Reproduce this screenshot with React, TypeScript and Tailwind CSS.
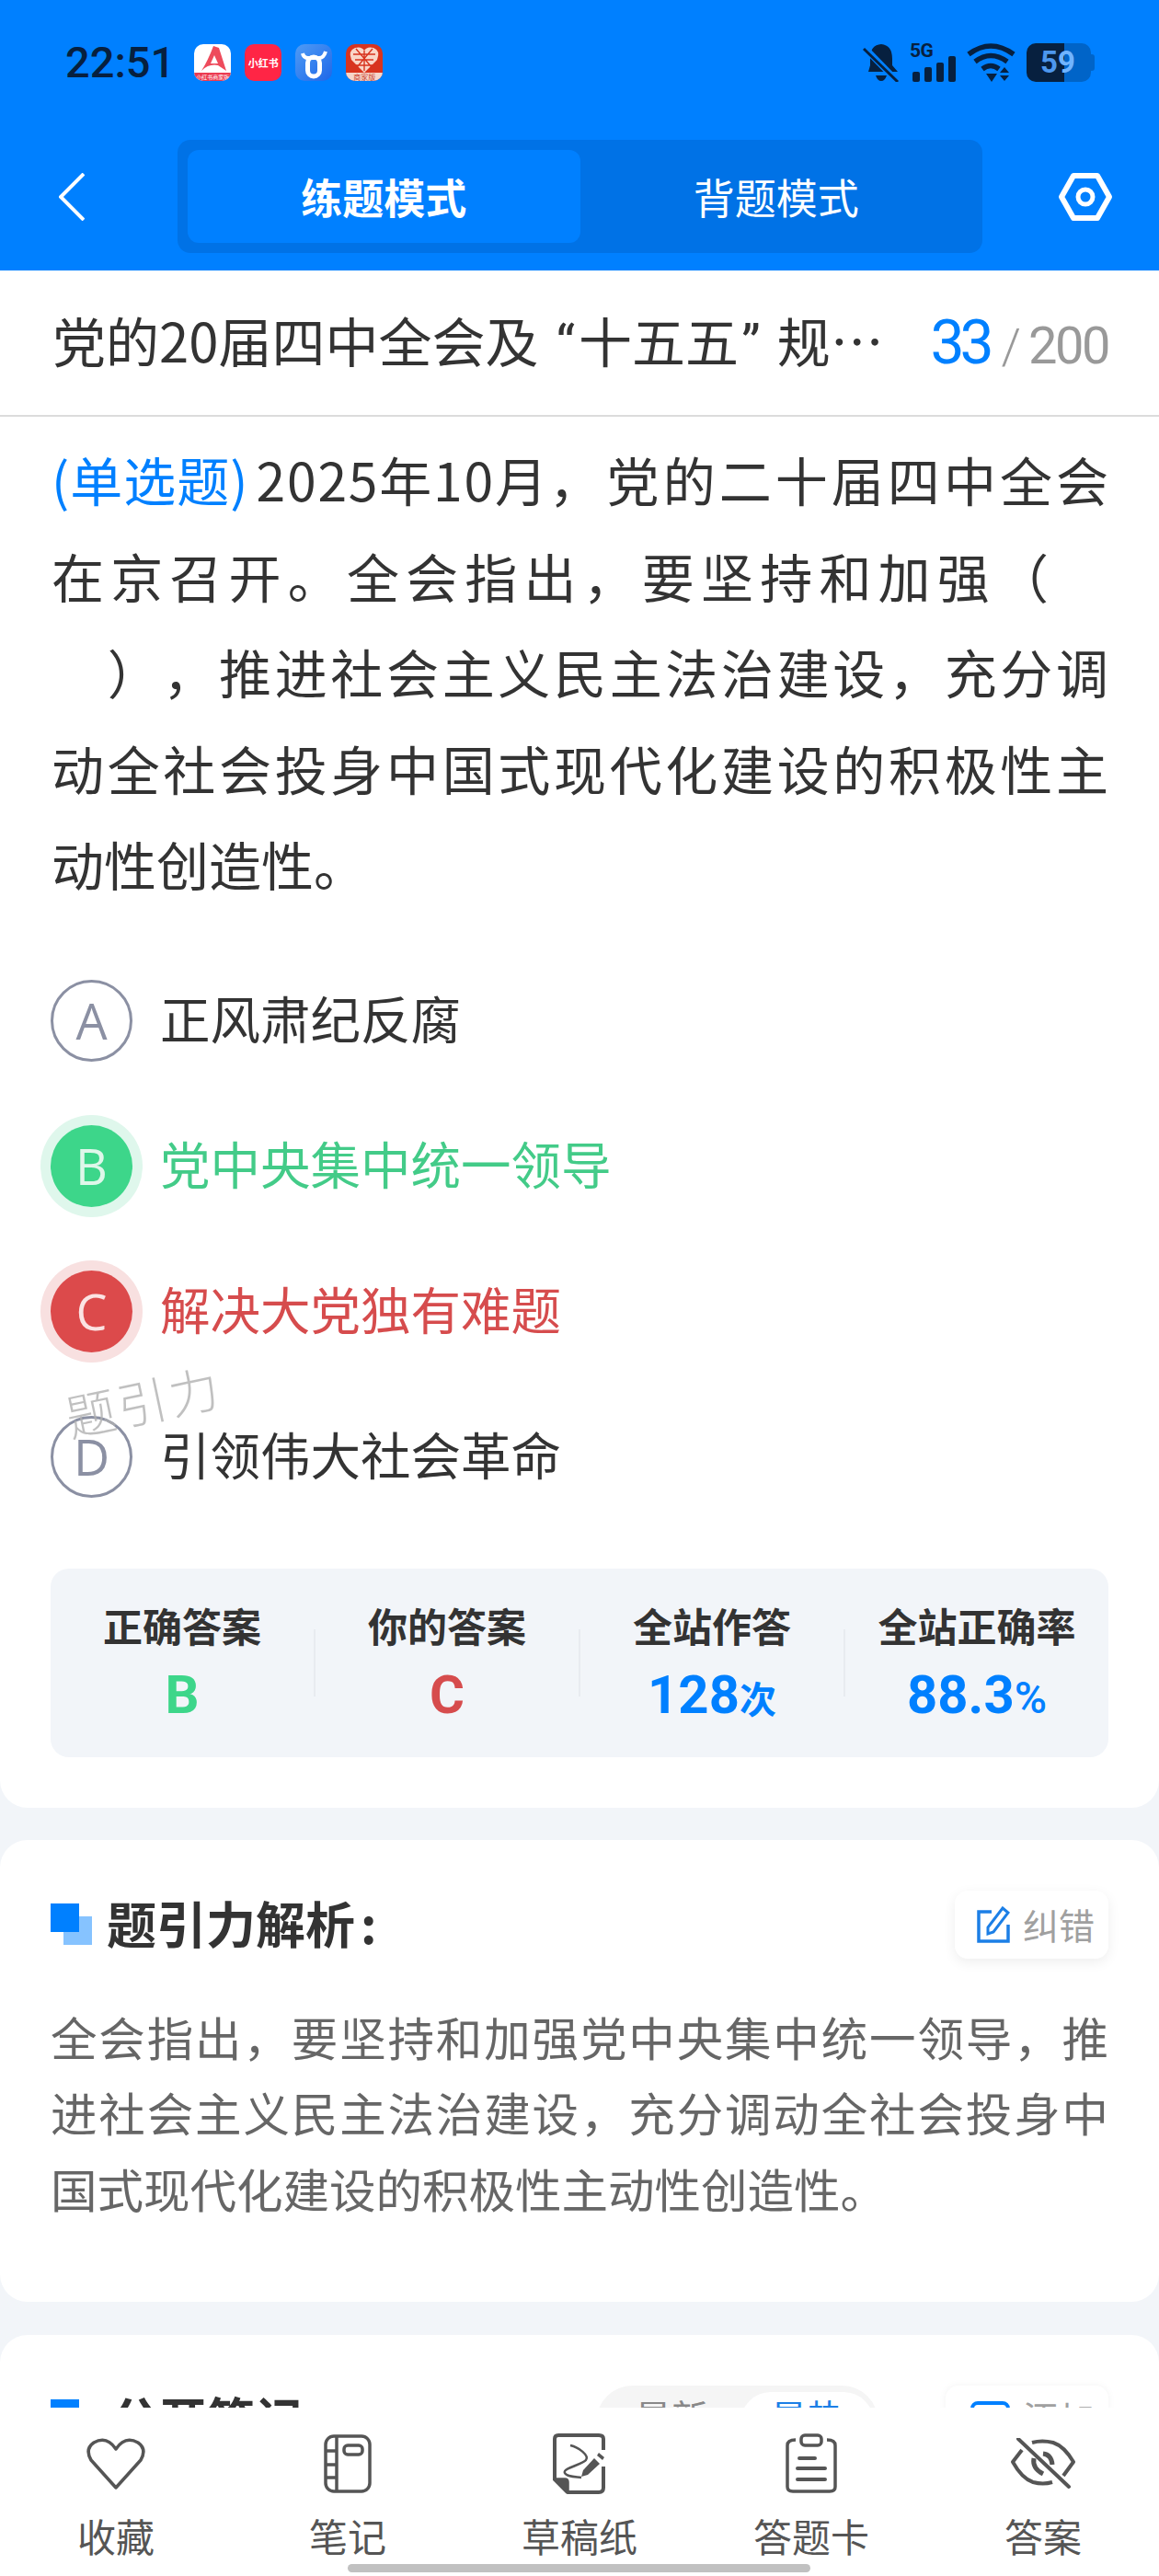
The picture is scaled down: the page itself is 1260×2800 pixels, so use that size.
const cjk = "font-['Noto_Sans_CJK_SC','Noto_Sans',sans-serif]"

const AppIcons = () => {
    return (
        <div className="flex gap-[15px] ml-[21px]">
            <div className="w-[40px] h-[40px] rounded-[10px] bg-white overflow-hidden flex flex-col items-center">
                <svg width="40" height="31" viewBox="0 0 40 31" className="shrink-0">
                    <path d="M21 2 L27 4 L35 29 L26 23 Q16 21 8 29 Q15 18 21 2 Z" fill="#ee4b5c" />
                    <path d="M22 12 L26 21 L18 21 Z" fill="#fff" />
                </svg>
                <div className="w-full flex-1 bg-[#ec3a50] text-white text-[6px] leading-[9px] text-center whitespace-nowrap">小红书商家版</div>
            </div>
            <div className="w-[40px] h-[40px] rounded-[10px] bg-[#ff2545] flex items-center justify-center text-white text-[11px] font-bold leading-none whitespace-nowrap">小红书</div>
            <div className="w-[40px] h-[40px] rounded-[10px] bg-gradient-to-br from-[#4f9bf5] to-[#1f66e8] flex items-center justify-center">
                <svg width="40" height="40" viewBox="0 0 40 40" fill="none" stroke="#fff">
                    <rect x="13.5" y="14" width="13" height="21" rx="6.5" strokeWidth="5" />
                    <path d="M8 10 Q9 15 14 15 H26 Q31 15 33 8" strokeWidth="4" />
                </svg>
            </div>
            <div className="w-[40px] h-[40px] rounded-[10px] bg-[#d8341f] overflow-hidden flex flex-col items-center">
                <svg width="36" height="30" viewBox="0 0 36 30" className="shrink-0 mt-[1px]">
                    <path d="M18 30 L4 16 Q0 6 8 3 Q15 1 18 6 Q21 1 28 3 Q36 6 32 16 Z" fill="#f9d6c8" />
                    <path d="M18 6 V28 M6 10 H30 M8 16 H28 M8 22 H28 M9 4 L26 24 M27 4 L10 24" stroke="#d8341f" strokeWidth="1.4" />
                </svg>
                <div className="w-full flex-1 bg-[#f6d6cb] text-[#c8402a] text-[8px] leading-[9px] text-center whitespace-nowrap">商家版</div>
            </div>
        </div>
    )
}

const StatusRight = () => {
    return (
        <div className="flex items-center h-[42px]">
            <svg width="40" height="42" viewBox="0 0 40 42" fill="#07203f">
                <path d="M20 1 Q32 2 32 17 V24 L38 31 H6 L8 24 V16 Q8 2 20 1 Z" />
                <path d="M14 35 H26 Q24 41 20 41 Q16 41 14 35 Z" />
                <path d="M2 5 L37 41" stroke="#0080ff" strokeWidth="7" />
                <path d="M1 6 L38 42" stroke="#07203f" strokeWidth="3" />
            </svg>
            <div className="relative w-[50px] h-[42px] ml-[11px]">
                <span className="absolute left-0 top-[-1px] font-['Roboto',sans-serif] font-bold text-[21px] leading-[18px] text-[#07203f] tracking-[-0.5px]">5G</span>
                <div className="absolute bottom-0 left-[3px] flex items-end gap-[5px]">
                    <div className="w-[8px] h-[11px] rounded-[2px] bg-[#07203f]" />
                    <div className="w-[8px] h-[16px] rounded-[2px] bg-[#07203f]" />
                    <div className="w-[8px] h-[21px] rounded-[2px] bg-[#07203f]" />
                    <div className="w-[8px] h-[28px] rounded-[2px] bg-[#07203f]" />
                </div>
            </div>
            <svg width="54" height="42" viewBox="0 0 54 42" className="ml-[12px]" fill="none" stroke="#07203f" strokeWidth="5.5">
                <path d="M2 12 Q26 -6 51 12" />
                <path d="M9 20 Q26 7 44 20" />
                <path d="M17 28 Q26 21 35 28" />
                <path d="M21 33 H33 L27 42 Z" fill="#07203f" stroke="none" />
                <path d="M41 26 L46 32 H36 Z M36 35 H46 L41 41 Z" fill="#07203f" stroke="none" />
            </svg>
            <div className="relative flex w-[74px] h-[42px] ml-[11px] items-center">
                <div className="w-[41px] h-full bg-[#07203f] rounded-l-[10px]" />
                <div className="w-[29px] h-full bg-[#0064c8] rounded-r-[10px]" />
                <div className="w-[4px] h-[18px] bg-[#0064c8] rounded-r-[3px]" />
                <span className="absolute left-[15px] top-0 font-['Roboto',sans-serif] font-bold text-[33px] leading-[42px] text-[#4d97ee]">5<span className="text-[#70b4ff]">9</span></span>
            </div>
        </div>
    )
}

const Header = () => {
    return (
        <header className="h-[294px] bg-[#0080ff] pt-[47px]">
            <div className="flex items-center justify-between h-[42px] pl-[71px] pr-[70px]">
                <div className="flex items-center">
                    <span className="font-['Roboto',sans-serif] font-medium text-[47px] leading-[42px] text-[#07203f]">22:51</span>
                    <AppIcons />
                </div>
                <StatusRight />
            </div>
            <div className="flex items-center mt-[63px] pl-[64px]">
                <svg width="28" height="52" viewBox="0 0 28 52" fill="none" stroke="#fff" strokeWidth="4">
                    <path d="M27 1 L2 26 L27 51" />
                </svg>
                <div className="grid grid-cols-2 w-[875px] h-[123px] ml-[101px] p-[11px] rounded-[14px] bg-[#0072e6]">
                    <div className="flex items-center justify-center rounded-[12px] bg-[#0080ff] text-white text-[45px] font-bold">练题模式</div>
                    <div className="flex items-center justify-center text-white text-[45px]">背题模式</div>
                </div>
                <svg width="60" height="54" viewBox="0 0 60 54" fill="none" stroke="#fff" strokeWidth="6" className="ml-[82px]">
                    <path d="M17 4 H43 L56 27 L43 50 H17 L4 27 Z" strokeLinejoin="round" />
                    <circle cx="30" cy="27" r="8" strokeWidth="5" />
                </svg>
            </div>
        </header>
    )
}

const Option = ({letter, text, state}:{letter:string, text:string, state?:'right'|'wrong'}) => {
    const circle = state === 'right'
        ? "bg-[#3dd68a] text-[#dff7ea] shadow-[0_0_0_11px_#dff7ec]"
        : state === 'wrong'
        ? "bg-[#dc4a4b] text-[#fbe3e3] shadow-[0_0_0_11px_#f8e0e0]"
        : "border-[3px] border-[#8b90a3] text-[#8b90a3]"
    const color = state === 'right' ? "text-[#43cb88]" : state === 'wrong' ? "text-[#d64c4d]" : "text-[#333333]"
    return (
        <div className="flex items-center h-[90px]">
            <div className={`flex items-center justify-center w-[89px] h-[89px] rounded-full font-['Open_Sans',sans-serif] font-normal text-[54px] ${circle}`}>{letter}</div>
            <span className={`ml-[30px] mb-[6px] text-[54.5px] leading-none ${color}`}>{text}</span>
        </div>
    )
}

const Stat = ({label, children}:{label:string, children:React.ReactNode}) => {
    return (
        <div className="flex-1 flex flex-col items-center">
            <div className="text-[43px] leading-[50px] font-bold text-[#333333]">{label}</div>
            <div className="mt-[20px] h-[62px] flex items-baseline font-['Roboto',sans-serif] font-bold text-[58px] leading-[62px]">{children}</div>
        </div>
    )
}

const Question = () => {
    const justified = "[text-align-last:justify]"
    return (
        <section className="bg-white rounded-b-[30px] px-[55px] pt-[15px] pb-[55px]">
            <div className="pl-[1px] text-[57px] leading-[104.5px] text-[#333333] [text-spacing-trim:space-all]">
                <div className={justified}><span className="inline-block mr-[8px] tracking-[1px] text-[#0080ff]">(单选题)</span><span className="inline-block tracking-[1.8px]">2025年10月，</span>党的二十届四中全会</div>
                <div className={`${justified} pr-[65px]`}>在京召开。全会指出，要坚持和加强（</div>
                <div className={justified}>　），推进社会主义民主法治建设，充分调</div>
                <div className={justified}>动全社会投身中国式现代化建设的积极性主</div>
                <div>动性创造性。</div>
            </div>
            <div className="relative flex flex-col gap-[68px] mt-[74px]">
                <Option letter="A" text="正风肃纪反腐" />
                <Option letter="B" text="党中央集中统一领导" state="right" />
                <Option letter="C" text="解决大党独有难题" state="wrong" />
                <Option letter="D" text="引领伟大社会革命" />
                <div className="absolute left-[15px] top-[430px] -rotate-[12deg] text-[54px] leading-none tracking-[3px] text-[#b0b0b0]/80 font-light">题引力</div>
            </div>
            <div className="flex items-center h-[205px] mt-[76px] rounded-[20px] bg-[#f2f5f9]">
                <Stat label="正确答案"><span className="text-[#3dd68a]">B</span></Stat>
                <div className="w-[2px] h-[73px] bg-[#e8ebf0]" />
                <Stat label="你的答案"><span className="text-[#d64c4d]">C</span></Stat>
                <div className="w-[2px] h-[73px] bg-[#e8ebf0]" />
                <Stat label="全站作答"><span className="text-[#0080ff]">128<span className={`${cjk} text-[40px]`}>次</span></span></Stat>
                <div className="w-[2px] h-[73px] bg-[#e8ebf0]" />
                <Stat label="全站正确率"><span className="text-[#0080ff]">88.3<span className="text-[48px] font-medium">%</span></span></Stat>
            </div>
        </section>
    )
}

const Analysis = () => {
    return (
        <section className="mt-[35px] h-[502px] bg-white rounded-[30px] px-[55px] pt-[55px]">
            <div className="flex items-center justify-between h-[74px]">
                <div className="flex items-center">
                    <div className="relative w-[45px] h-[45px]">
                        <div className="absolute left-[14px] top-[14px] w-[31px] h-[31px] bg-[#86c3ff]" />
                        <div className="absolute left-0 top-0 w-[31px] h-[31px] bg-[#0080ff]" />
                    </div>
                    <span className="ml-[16px] mb-[4px] text-[54px] leading-none font-bold text-[#333333]">题引力解析<span className="ml-[6px]">:</span></span>
                </div>
                <div className="flex items-center w-[167px] h-[74px] pl-[24px] rounded-[14px] bg-white shadow-[0_4px_14px_rgba(0,0,0,0.07)]">
                    <svg width="36" height="40" viewBox="0 0 36 40" fill="none" stroke="#1c7fe6" strokeWidth="3.5">
                        <path d="M16 6 H2 V38 H34 V20" />
                        <path d="M28 2 L34 7 L18 28 L12 30 L12 23 Z" strokeWidth="3" />
                    </svg>
                    <span className="ml-[14px] text-[39px] leading-none text-[#a0a0a0]">纠错</span>
                </div>
            </div>
            <div className="mt-[43px] text-[50.5px] leading-[82.5px] text-[#666666]">
                <div className="[text-align-last:justify]">全会指出，要坚持和加强党中央集中统一领导，推</div>
                <div className="[text-align-last:justify]">进社会主义民主法治建设，充分调动全社会投身中</div>
                <div>国式现代化建设的积极性主动性创造性。</div>
            </div>
        </section>
    )
}

const Notes = () => {
    return (
        <section className="mt-[36px] h-[300px] bg-white rounded-t-[30px] px-[55px] pt-[55px]">
            <div className="flex items-start justify-between">
                <div className="flex items-start">
                    <div className="w-[31px] h-[31px] mt-[15px] bg-[#0080ff]" />
                    <span className="ml-[35px] mt-[9px] text-[52px] leading-none font-bold text-[#333333]">公开笔记</span>
                </div>
                <div className="flex items-start">
                    <div className="flex w-[307px] h-[80px] rounded-[40px] bg-[#f5f5f5] p-[7px] pr-[5px] text-[40px] leading-[40px]">
                        <div className="flex-1 flex justify-center pt-[6px] text-[#888888]">最新</div>
                        <div className="w-[145px] flex justify-center pt-[6px] rounded-[34px] bg-white text-[#1c7fe6]">最热</div>
                    </div>
                    <div className="flex items-start w-[177px] h-[80px] ml-[73px] pl-[27px] pt-[17px] rounded-[14px] bg-white shadow-[0_0_8px_rgba(0,0,0,0.05)]">
                        <div className="w-[43px] h-[43px] rounded-[8px] border-[4px] border-[#0080ff]" />
                        <span className="ml-[14px] mt-[-3px] text-[39px] leading-[40px] text-[#a0a0a0]">添加</span>
                    </div>
                </div>
            </div>
        </section>
    )
}

const NavItem = ({label, children}:{label:string, children:React.ReactNode}) => {
    return (
        <div className="flex flex-col items-center">
            <div className="flex items-center justify-center h-[66px]">{children}</div>
            <div className="mt-[22px] text-[42px] leading-[46px] text-[#555555]">{label}</div>
        </div>
    )
}

const BottomBar = () => {
    const stroke = { fill: "none", stroke: "#555555", strokeWidth: 3.5 }
    return (
        <nav className="absolute left-0 right-0 bottom-0 h-[183px] bg-white pt-[28px]">
            <div className="grid grid-cols-5">
                <NavItem label="收藏">
                    <svg width="64" height="56" viewBox="0 0 64 56" {...stroke}>
                        <path d="M32 54 L5 24 Q-2 12 8 5 Q22 -3 32 12 Q42 -3 56 5 Q66 12 59 24 Z" strokeLinejoin="round" />
                    </svg>
                </NavItem>
                <NavItem label="笔记">
                    <svg width="52" height="64" viewBox="0 0 52 64" {...stroke}>
                        <rect x="2" y="2" width="48" height="60" rx="9" />
                        <path d="M14 2 V62 M2 18 H14 M2 33 H14 M2 47 H14" />
                        <rect x="22" y="12" width="20" height="10" rx="4" />
                    </svg>
                </NavItem>
                <NavItem label="草稿纸">
                    <svg width="58" height="66" viewBox="0 0 58 66" {...stroke}>
                        <path d="M16 64 H50 Q55 64 55 59 V36 M55 18 V6 Q55 2 50 2 H6 Q2 2 2 6 V50 L16 64" strokeWidth="4" />
                        <path d="M2 50 H13 Q16 50 16 53 V64 Z" fill="#555555" />
                        <path d="M19 13 C28 15 40 24 36 29 C32 34 10 38 13 43 C15 47 24 47 31 48" strokeWidth="2.5" />
                        <path d="M45 27 L51 33 L38 45 L31 47 L33 40 Z" fill="#555555" stroke="none" />
                        <path d="M48 24 L50 21 L56 26 L54 29 Z" fill="#555555" stroke="none" />
                    </svg>
                </NavItem>
                <NavItem label="答题卡">
                    <svg width="56" height="66" viewBox="0 0 56 66" {...stroke}>
                        <path d="M11 7 Q2 7 2 13 V58 Q2 63 8 63 H48 Q54 63 54 58 V13 Q54 7 45 7" />
                        <rect x="17" y="2" width="22" height="11" rx="4" />
                        <path d="M15 27 H32 M13 38 H43 M13 50 H43" strokeWidth="4" strokeLinecap="round" />
                    </svg>
                </NavItem>
                <NavItem label="答案">
                    <svg width="70" height="56" viewBox="0 0 70 56" {...stroke} strokeWidth="4">
                        <path d="M12 13 L2 26 Q12 44 24 48 Q35 51 45 48 M57 41 L68 26 Q58 9 46 5 Q34 2 23 5" strokeLinejoin="round" />
                        <path d="M25 22 Q23 33 35 39 M35 17 Q44 18 45 29" strokeWidth="5" />
                        <path d="M8 1 L63 53" strokeWidth="4" strokeLinecap="round" />
                    </svg>
                </NavItem>
            </div>
            <div className="absolute left-[378px] top-[170px] w-[503px] h-[9px] rounded-full bg-[#c1c1c1]" />
        </nav>
    )
}

const App = () => {
    return (
        <main className={`relative w-full h-[2800px] overflow-hidden bg-[#f2f5f9] ${cjk}`}>
            <Header />
            <div className="flex items-center justify-between h-[159px] bg-white border-b-2 border-[#dcdcdc] pl-[57px] pr-[55px]">
                <div className="mb-[3px] text-[58px] leading-none text-[#333333] whitespace-nowrap">党的20届四中全会及 <span className="ml-[6px] mr-[4px] font-['Roboto',sans-serif]">“</span>十五五<span className="ml-[3px] mr-[5px] font-['Roboto',sans-serif]">”</span> 规⋯</div>
                <div className="flex items-baseline font-['Roboto',sans-serif] leading-none">
                    <span className="text-[66px] tracking-[-5px] text-[#0080ff]">33</span>
                    <span className="ml-[13px] text-[54px] font-light text-[#999999]">/</span>
                    <span className="ml-[8px] text-[56px] tracking-[-2.5px] text-[#999999]">200</span>
                </div>
            </div>
            <Question />
            <Analysis />
            <Notes />
            <BottomBar />
        </main>
    )
}

export default App
